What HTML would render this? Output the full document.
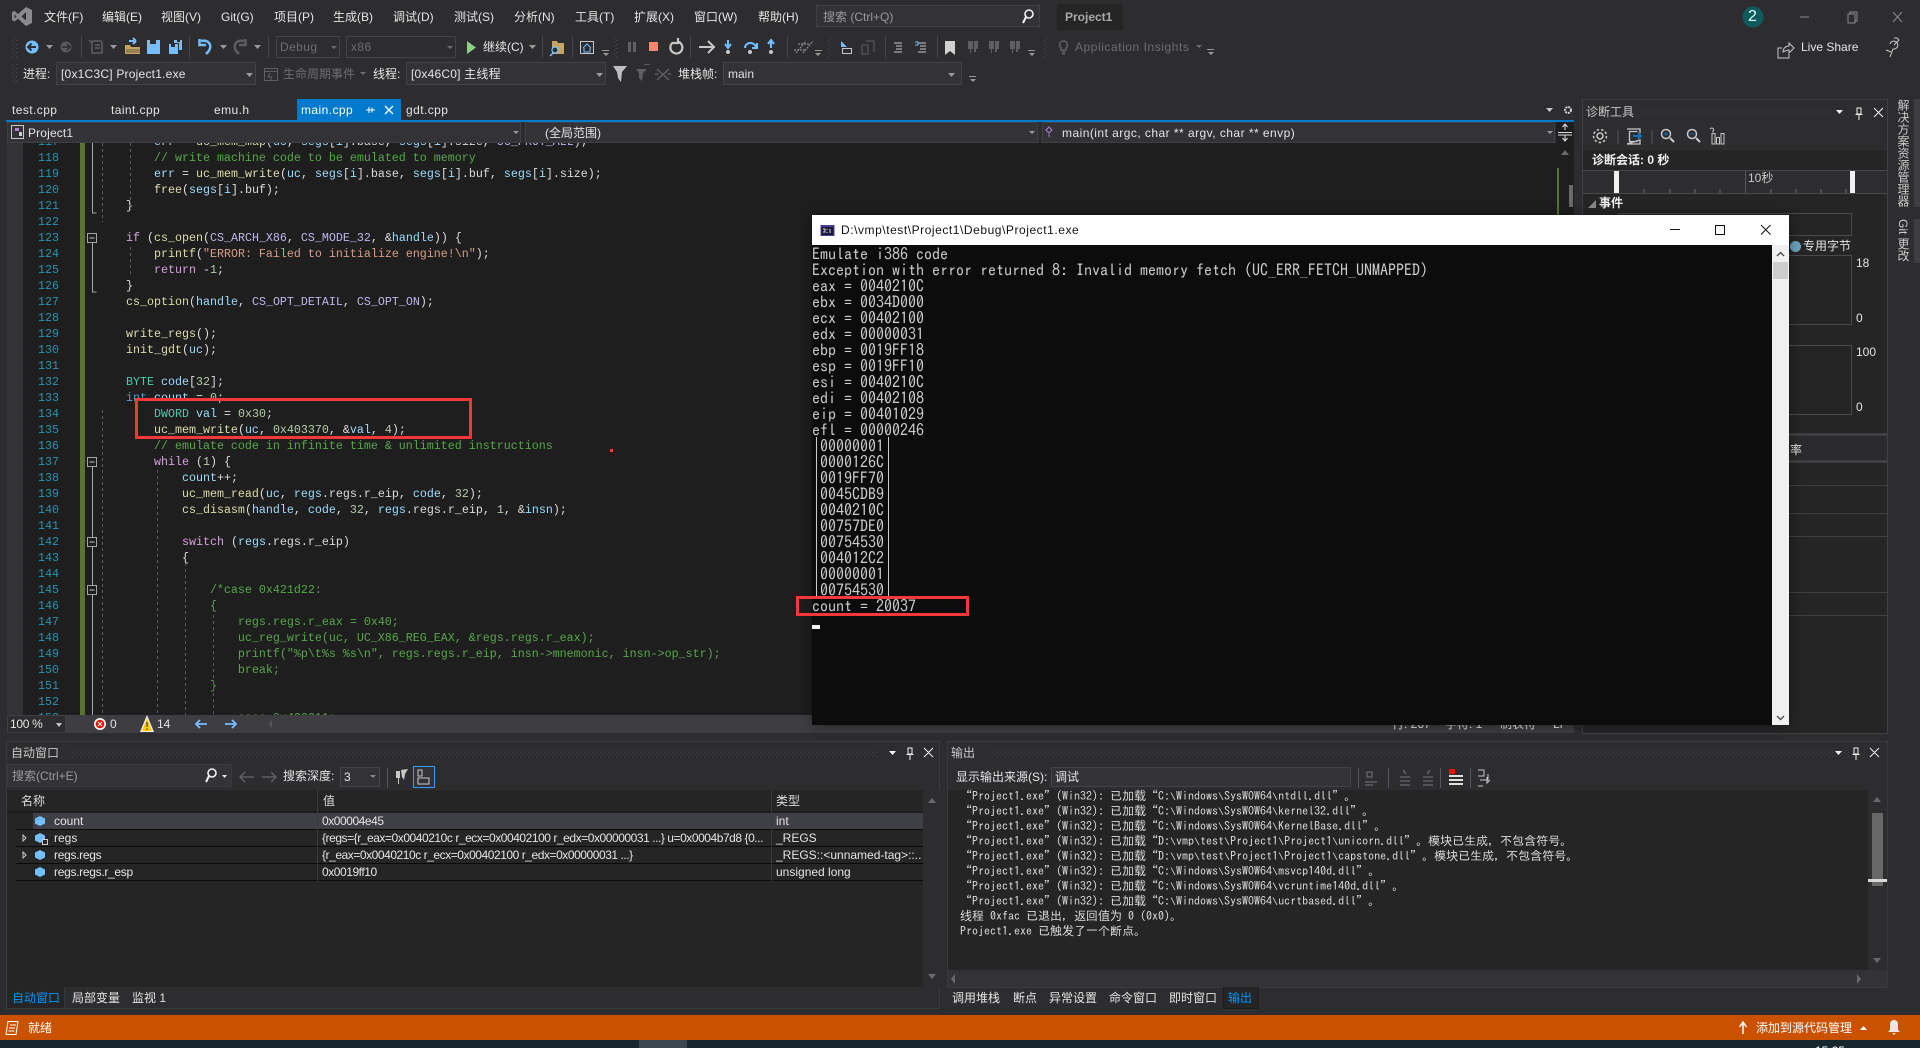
<!DOCTYPE html>
<html lang="zh"><head><meta charset="utf-8"><title>Project1</title>
<style>
html,body{margin:0;padding:0;background:#2d2d30;width:1920px;height:1048px;overflow:hidden}
body{position:relative;font:12px/16px "Liberation Sans","Noto Sans CJK SC",sans-serif;color:#e4e4e4}
.t{position:absolute;white-space:pre;line-height:16px}
.b{position:absolute;box-sizing:border-box}
.d{color:#6d6d70}
.w{letter-spacing:.42px}
.nn{letter-spacing:-.45px}
.code{position:absolute;left:126px;top:134px;font:11.67px/16px "Liberation Mono","Noto Sans CJK SC",monospace;color:#dcdcdc;white-space:pre;margin:0}
.ln{position:absolute;left:38px;top:134px;font:11.67px/16px "Liberation Mono",monospace;color:#2b91af;white-space:pre;margin:0}
.c{color:#57a64a}.k{color:#d8a0df}.u{color:#569cd6}.y{color:#4ec9b0}.f{color:#dcdcaa}.v{color:#9cdcfe}.s{color:#d69d85}.n{color:#b5cea8}.m{color:#bfb6ef}
.con{position:absolute;left:812px;top:246px;margin:0;font:16px/16px "IPAGothic","Liberation Mono",monospace;color:#cccccc;white-space:pre}
.out{position:absolute;left:960px;top:789px;margin:0;font:12px/15px "IPAGothic","Liberation Mono",monospace;color:#dcdcdc;white-space:pre}
.out div{height:15px;overflow:visible}
.out i{font-family:"Liberation Mono",monospace;font-size:10px;font-style:normal;line-height:1px}
.hdr{color:#dcdcdc}
.blue{color:#0097fb}
</style></head><body>

<!-- title & toolbars text -->
<div class="t" style="left:44px;top:9px">文件(F)</div>
<div class="t" style="left:102px;top:9px">编辑(E)</div>
<div class="t" style="left:161px;top:9px">视图(V)</div>
<div class="t" style="left:221px;top:9px">Git(G)</div>
<div class="t" style="left:274px;top:9px">项目(P)</div>
<div class="t" style="left:333px;top:9px">生成(B)</div>
<div class="t" style="left:393px;top:9px">调试(D)</div>
<div class="t" style="left:454px;top:9px">测试(S)</div>
<div class="t" style="left:514px;top:9px">分析(N)</div>
<div class="t" style="left:575px;top:9px">工具(T)</div>
<div class="t" style="left:634px;top:9px">扩展(X)</div>
<div class="t" style="left:694px;top:9px">窗口(W)</div>
<div class="t" style="left:758px;top:9px">帮助(H)</div>
<div class="b" style="left:816px;top:5px;width:224px;height:22px;background:#333337;border:1px solid #3f3f46"></div>
<div class="t" style="left:823px;top:9px;color:#999">搜索 (Ctrl+Q)</div>
<div class="b" style="left:1057px;top:4px;width:66px;height:26px;background:#252526"></div>
<div class="t" style="left:1065px;top:9px;font-weight:bold;color:#a8a8a8">Project1</div>
<div class="t" style="left:1748px;top:9px;font-size:16px;color:#dff;z-index:2">2</div>

<div class="b" style="left:276px;top:36px;width:64px;height:22px;border:1px solid #434346"></div>
<div class="t d w" style="left:280px;top:39px">Debug</div>
<div class="b" style="left:346px;top:36px;width:110px;height:22px;border:1px solid #434346"></div>
<div class="t d w" style="left:351px;top:39px">x86</div>
<div class="t" style="left:483px;top:39px">继续(C)</div>
<div class="t d" style="left:1075px;top:39px;letter-spacing:.55px">Application Insights</div>
<div class="t" style="left:1801px;top:39px">Live Share</div>

<div class="t" style="left:23px;top:66px">进程:</div>
<div class="b" style="left:56px;top:62px;width:200px;height:23px;background:#333337;border:1px solid #434346"></div>
<div class="t" style="left:61px;top:66px;letter-spacing:.22px">[0x1C3C] Project1.exe</div>
<div class="t d" style="left:283px;top:66px">生命周期事件</div>
<div class="t" style="left:373px;top:66px">线程:</div>
<div class="b" style="left:406px;top:62px;width:200px;height:23px;background:#333337;border:1px solid #434346"></div>
<div class="t" style="left:411px;top:66px;letter-spacing:.2px">[0x46C0] 主线程</div>
<div class="t" style="left:678px;top:66px">堆栈帧:</div>
<div class="b" style="left:723px;top:62px;width:239px;height:23px;background:#333337;border:1px solid #434346"></div>
<div class="t" style="left:728px;top:66px">main</div>

<!-- document tabs -->
<div class="b" style="left:297px;top:99px;width:104px;height:21px;background:#007acc"></div>
<div class="b" style="left:6px;top:120px;width:1568px;height:2px;background:#007acc"></div>
<div class="t w" style="left:12px;top:102px">test.cpp</div>
<div class="t w" style="left:111px;top:102px">taint.cpp</div>
<div class="t w" style="left:214px;top:102px">emu.h</div>
<div class="t w" style="left:301px;top:102px;color:#fff">main.cpp</div>
<div class="t w" style="left:406px;top:102px">gdt.cpp</div>

<!-- nav bar -->
<div class="b" style="left:6px;top:122px;width:1568px;height:21px;background:#2d2d30"></div>
<div class="b" style="left:7px;top:122px;width:514px;height:21px;background:#333337;border:1px solid #3f3f46"></div>
<div class="b" style="left:525px;top:122px;width:513px;height:21px;background:#333337;border:1px solid #3f3f46"></div>
<div class="b" style="left:1042px;top:122px;width:513px;height:21px;background:#333337;border:1px solid #3f3f46"></div>
<div class="b" style="left:1556px;top:122px;width:18px;height:21px;background:#1e1e1e"></div>
<div class="t" style="left:28px;top:125px;letter-spacing:.15px">Project1</div>
<div class="t" style="left:545px;top:125px">(全局范围)</div>
<div class="t" style="left:1062px;top:125px;letter-spacing:.46px">main(int argc, char ** argv, char ** envp)</div>

<!-- editor -->
<div class="b" style="left:7px;top:143px;width:1567px;height:572px;background:#1e1e1e;overflow:hidden">
<pre class="ln" style="left:31px;top:-9px">117
118
119
120
121
122
123
124
125
126
127
128
129
130
131
132
133
134
135
136
137
138
139
140
141
142
143
144
145
146
147
148
149
150
151
152
153</pre>
<pre class="code" style="left:119px;top:-9px">    <span class="v">err</span> = <span class="f">uc_mem_map</span>(<span class="v">uc</span>, <span class="v">segs</span>[<span class="v">i</span>].base, <span class="v">segs</span>[<span class="v">i</span>].size, <span class="m">UC_PROT_ALL</span>);
    <span class="c">// write machine code to be emulated to memory</span>
    <span class="v">err</span> = <span class="f">uc_mem_write</span>(<span class="v">uc</span>, <span class="v">segs</span>[<span class="v">i</span>].base, <span class="v">segs</span>[<span class="v">i</span>].buf, <span class="v">segs</span>[<span class="v">i</span>].size);
    <span class="f">free</span>(<span class="v">segs</span>[<span class="v">i</span>].buf);
}

<span class="k">if</span> (<span class="f">cs_open</span>(<span class="m">CS_ARCH_X86</span>, <span class="m">CS_MODE_32</span>, &amp;<span class="v">handle</span>)) {
    <span class="f">printf</span>(<span class="s">"ERROR: Failed to initialize engine!\n"</span>);
    <span class="k">return</span> -<span class="n">1</span>;
}
<span class="f">cs_option</span>(<span class="v">handle</span>, <span class="m">CS_OPT_DETAIL</span>, <span class="m">CS_OPT_ON</span>);

<span class="f">write_regs</span>();
<span class="f">init_gdt</span>(<span class="v">uc</span>);

<span class="y">BYTE</span> <span class="v">code</span>[<span class="n">32</span>];
<span class="u">int</span> <span class="v">count</span> = <span class="n">0</span>;
    <span class="y">DWORD</span> <span class="v">val</span> = <span class="n">0x30</span>;
    <span class="f">uc_mem_write</span>(<span class="v">uc</span>, <span class="n">0x403370</span>, &amp;<span class="v">val</span>, <span class="n">4</span>);
    <span class="c">// emulate code in infinite time &amp; unlimited instructions</span>
    <span class="k">while</span> (<span class="n">1</span>) {
        <span class="v">count</span>++;
        <span class="f">uc_mem_read</span>(<span class="v">uc</span>, <span class="v">regs</span>.regs.r_eip, <span class="v">code</span>, <span class="n">32</span>);
        <span class="f">cs_disasm</span>(<span class="v">handle</span>, <span class="v">code</span>, <span class="n">32</span>, <span class="v">regs</span>.regs.r_eip, <span class="n">1</span>, &amp;<span class="v">insn</span>);

        <span class="k">switch</span> (<span class="v">regs</span>.regs.r_eip)
        {

<span class="c">            /*case 0x421d22:
            {
                regs.regs.r_eax = 0x40;
                uc_reg_write(uc, UC_X86_REG_EAX, &amp;regs.regs.r_eax);
                printf("%p\t%s %s\n", regs.regs.r_eip, insn-&gt;mnemonic, insn-&gt;op_str);
                break;
            }

                case 0x423311:</span></pre>
</div>
<div class="b" style="left:7px;top:143px;width:16px;height:572px;background:#333337"></div>

<!-- strip below editor -->
<div class="b" style="left:7px;top:715px;width:1567px;height:18px;background:#3e3e42"></div>
<div class="b" style="left:7px;top:715px;width:59px;height:18px;background:#2d2d30;border:1px solid #3f3f46"></div>
<div class="t" style="left:10px;top:716px;letter-spacing:-.3px">100 %</div>
<div class="t" style="left:110px;top:716px">0</div>
<div class="t" style="left:157px;top:716px">14</div>
<div class="t" style="left:1392px;top:716px">行: 267</div>
<div class="t" style="left:1445px;top:716px">字符: 1</div>
<div class="t" style="left:1500px;top:716px">制表符</div>
<div class="t" style="left:1553px;top:716px">LF</div>

<!-- Diagnostics -->
<div class="b" style="left:1582px;top:99px;width:306px;height:635px;border:1px solid #3f3f46;background:#252526"></div>
<div class="b" style="left:1583px;top:100px;width:304px;height:50px;background:#2d2d30"></div>
<div class="t" style="left:1586px;top:104px;color:#c8c8c8">诊断工具</div>
<div class="t" style="left:1592px;top:152px;font-weight:bold;color:#f1f1f1">诊断会话: 0 秒</div>
<div class="b" style="left:1583px;top:170px;width:304px;height:24px;background:#2d2d30;border-top:1px solid #4a4a4e;border-bottom:1px solid #4a4a4e"></div>
<div class="b" style="left:1745px;top:171px;width:1px;height:22px;background:#55555a"></div>
<div class="b" style="left:1614px;top:171px;width:5px;height:22px;background:#f1f1f1"></div>
<div class="b" style="left:1850px;top:171px;width:5px;height:22px;background:#f1f1f1"></div>
<div class="t" style="left:1748px;top:170px;color:#c8c8c8">10秒</div>
<div class="t" style="left:1599px;top:195px;font-weight:bold;color:#f1f1f1">事件</div>
<div class="b" style="left:1618px;top:213px;width:234px;height:23px;border:1px solid #4a4a4e"></div>
<div class="b" style="left:1790px;top:241px;width:11px;height:11px;border-radius:50%;background:#6ba2bd"></div>
<div class="t" style="left:1803px;top:238px">专用字节</div>
<div class="b" style="left:1618px;top:255px;width:234px;height:70px;border:1px solid #4a4a4e"></div>
<div class="t" style="left:1856px;top:255px">18</div>
<div class="t" style="left:1856px;top:310px">0</div>
<div class="b" style="left:1618px;top:345px;width:234px;height:70px;border:1px solid #4a4a4e"></div>
<div class="t" style="left:1856px;top:344px">100</div>
<div class="t" style="left:1856px;top:399px">0</div>
<div class="b" style="left:1583px;top:433px;width:304px;height:3px;background:#3f3f42"></div>
<div class="b" style="left:1583px;top:436px;width:304px;height:24px;background:#2a2a2c"></div>
<div class="t" style="left:1790px;top:442px">率</div>
<div class="b" style="left:1583px;top:460px;width:304px;height:3px;background:#3f3f42"></div>
<div class="b" style="left:1583px;top:485px;width:304px;height:1px;background:#3f3f42"></div>
<div class="b" style="left:1583px;top:513px;width:304px;height:1px;background:#3f3f42"></div>
<div class="b" style="left:1583px;top:536px;width:304px;height:1px;background:#3f3f42"></div>
<div class="b" style="left:1583px;top:592px;width:304px;height:1px;background:#3f3f42"></div>
<div class="b" style="left:1583px;top:615px;width:304px;height:1px;background:#3f3f42"></div>

<!-- right sidebar -->
<div class="b" style="left:1914px;top:99px;width:6px;height:108px;background:#3e3e42"></div>
<div class="b" style="left:1914px;top:219px;width:6px;height:44px;background:#3e3e42"></div>
<div class="t" style="left:1895px;top:99px;writing-mode:vertical-rl;line-height:16px;color:#c8c8c8">解决方案资源管理器</div>
<div class="t" style="left:1895px;top:219px;writing-mode:vertical-rl;line-height:16px;color:#c8c8c8">Git 更改</div>

<!-- Auto panel -->
<div class="b" style="left:6px;top:741px;width:934px;height:268px;border:1px solid #3a3a3d;background:#2d2d30"></div>
<div class="t" style="left:11px;top:745px;color:#c8c8c8">自动窗口</div>
<div class="b" style="left:7px;top:764px;width:225px;height:23px;background:#333337;border:1px solid #3a3a3d"></div>
<div class="t" style="left:12px;top:768px;color:#999">搜索(Ctrl+E)</div>
<div class="t" style="left:283px;top:768px">搜索深度:</div>
<div class="b" style="left:340px;top:767px;width:40px;height:20px;background:#333337;border:1px solid #434346"></div>
<div class="t" style="left:344px;top:769px">3</div>
<div class="b" style="left:413px;top:766px;width:22px;height:22px;border:1px solid #3399ff;background:#333337"></div>
<div class="b" style="left:7px;top:790px;width:933px;height:197px;background:#252526"></div>
<div class="t hdr" style="left:21px;top:793px">名称</div>
<div class="t hdr" style="left:323px;top:793px">值</div>
<div class="t hdr" style="left:776px;top:793px">类型</div>
<div class="b" style="left:7px;top:811px;width:916px;height:2px;background:#1c1c1c"></div>
<div class="b" style="left:33px;top:813px;width:890px;height:16px;background:#3f3f46"></div>
<div class="b" style="left:16px;top:829px;width:907px;height:1px;background:#0a0a0a"></div>
<div class="b" style="left:16px;top:846px;width:907px;height:1px;background:#0a0a0a"></div>
<div class="b" style="left:16px;top:863px;width:907px;height:1px;background:#0a0a0a"></div>
<div class="b" style="left:16px;top:880px;width:907px;height:1px;background:#0a0a0a"></div>
<div class="b" style="left:317px;top:790px;width:1px;height:91px;background:#3a3a3d"></div>
<div class="b" style="left:771px;top:790px;width:1px;height:91px;background:#3a3a3d"></div>
<div class="t" style="left:54px;top:813px">count</div>
<div class="t nn" style="left:322px;top:813px;width:445px;overflow:hidden">0x00004e45</div>
<div class="t" style="left:776px;top:813px">int</div>
<div class="t" style="left:54px;top:830px">regs</div>
<div class="t nn" style="left:322px;top:830px;width:448px;overflow:hidden">{regs={r_eax=0x0040210c r_ecx=0x00402100 r_edx=0x00000031 ...} u=0x0004b7d8 {0...</div>
<div class="t" style="left:776px;top:830px">_REGS</div>
<div class="t" style="left:54px;top:847px;letter-spacing:-.3px">regs.regs</div>
<div class="t nn" style="left:322px;top:847px">{r_eax=0x0040210c r_ecx=0x00402100 r_edx=0x00000031 ...}</div>
<div class="t" style="left:776px;top:847px;width:146px;overflow:hidden">_REGS::&lt;unnamed-tag&gt;::...</div>
<div class="t" style="left:54px;top:864px;letter-spacing:-.3px">regs.regs.r_esp</div>
<div class="t nn" style="left:322px;top:864px">0x0019ff10</div>
<div class="t" style="left:776px;top:864px">unsigned long</div>
<div class="b" style="left:923px;top:790px;width:17px;height:197px;background:#2d2d30"></div>
<div class="b" style="left:6px;top:987px;width:59px;height:22px;background:#252526;border:1px solid #3a3a3d;border-top:0"></div>
<div class="t blue" style="left:12px;top:990px">自动窗口</div>
<div class="t" style="left:72px;top:990px">局部变量</div>
<div class="t" style="left:132px;top:990px">监视 1</div>

<!-- Output panel -->
<div class="b" style="left:947px;top:741px;width:941px;height:247px;border:1px solid #3a3a3d;background:#2d2d30"></div>
<div class="t" style="left:951px;top:745px;color:#c8c8c8">输出</div>
<div class="t" style="left:956px;top:769px">显示输出来源(S):</div>
<div class="b" style="left:1051px;top:767px;width:300px;height:20px;background:#333337;border:1px solid #434346"></div>
<div class="t" style="left:1055px;top:769px">调试</div>
<div class="b" style="left:948px;top:790px;width:920px;height:180px;background:#252526"></div>
<div class="out"><div>“Project1.exe”(Win32): 已加载“C:<i>\</i>Windows<i>\</i>SysWOW64<i>\</i>ntdll.dll”。</div><div>“Project1.exe”(Win32): 已加载“C:<i>\</i>Windows<i>\</i>SysWOW64<i>\</i>kernel32.dll”。</div><div>“Project1.exe”(Win32): 已加载“C:<i>\</i>Windows<i>\</i>SysWOW64<i>\</i>KernelBase.dll”。</div><div>“Project1.exe”(Win32): 已加载“D:<i>\</i>vmp<i>\</i>test<i>\</i>Project1<i>\</i>Project1<i>\</i>unicorn.dll”。模块已生成，不包含符号。</div><div>“Project1.exe”(Win32): 已加载“D:<i>\</i>vmp<i>\</i>test<i>\</i>Project1<i>\</i>Project1<i>\</i>capstone.dll”。模块已生成，不包含符号。</div><div>“Project1.exe”(Win32): 已加载“C:<i>\</i>Windows<i>\</i>SysWOW64<i>\</i>msvcp140d.dll”。</div><div>“Project1.exe”(Win32): 已加载“C:<i>\</i>Windows<i>\</i>SysWOW64<i>\</i>vcruntime140d.dll”。</div><div>“Project1.exe”(Win32): 已加载“C:<i>\</i>Windows<i>\</i>SysWOW64<i>\</i>ucrtbased.dll”。</div><div>线程 0xfac 已退出，返回值为 0 (0x0)。</div><div>Project1.exe 已触发了一个断点。</div></div>
<div class="b" style="left:1868px;top:790px;width:19px;height:180px;background:#2d2d30"></div>
<div class="b" style="left:1872px;top:813px;width:11px;height:73px;background:#686868"></div>
<div class="b" style="left:1868px;top:879px;width:19px;height:3px;background:#d8d8d8"></div>
<div class="b" style="left:948px;top:970px;width:939px;height:17px;background:#333337"></div>
<div class="b" style="left:1223px;top:987px;width:36px;height:22px;background:#252526;border:1px solid #1c1c1c;border-top:0"></div>
<div class="t" style="left:952px;top:990px">调用堆栈</div>
<div class="t" style="left:1013px;top:990px">断点</div>
<div class="t" style="left:1049px;top:990px">异常设置</div>
<div class="t" style="left:1109px;top:990px">命令窗口</div>
<div class="t" style="left:1169px;top:990px">即时窗口</div>
<div class="t blue" style="left:1228px;top:990px">输出</div>

<!-- status bar -->
<div class="b" style="left:0;top:1015px;width:1920px;height:25px;background:#ca5100"></div>
<div class="t" style="left:28px;top:1020px;color:#fff">就绪</div>
<div class="t" style="left:1756px;top:1020px;color:#fff">添加到源代码管理</div>
<div class="b" style="left:0;top:1040px;width:1920px;height:8px;background:#18272e;overflow:hidden">
  <div class="b" style="left:639px;top:0;width:48px;height:8px;background:#3a474e"></div>
  <div class="t" style="left:1815px;top:3px;color:#fff">15:25</div>
</div>

<!-- icons layer -->
<svg width="1920" height="1048" viewBox="0 0 1920 1048" style="position:absolute;left:0;top:0" fill="none">
<defs><pattern id="dot" width="4" height="4" patternUnits="userSpaceOnUse"><rect width="1" height="1" fill="#4a4a4e"/><rect x="2" y="2" width="1" height="1" fill="#4a4a4e"/></pattern></defs>
<!-- logo -->
<path fill-rule="evenodd" fill="#8a8a8d" d="M26 7 32 10V23L26 26 18 18.8 14.500 21.500 12 20V12L14.500 11 18 14ZM26 12 21.500 16.500 26 20.500ZM14.500 14.300V18.500L16.500 16.500Z"/>
<!-- title icons -->
<circle cx="1029" cy="14" r="4" stroke="#f1f1f1" stroke-width="1.600"/><path d="M1026 17 1023 23" stroke="#f1f1f1" stroke-width="2"/>
<circle cx="1753" cy="17" r="10.500" fill="#0f5a5c"/>
<path d="M1800 17H1809" stroke="#8a8a8d"/>
<path d="M1848 14h7v9h-7zM1850 14v-2h7v9h-2" stroke="#8a8a8d"/>
<path d="M1893 12 1902 22M1902 12 1893 22" stroke="#8a8a8d"/>
<!-- grips -->
<rect x="12" y="37" width="5" height="20" fill="url(#dot)"/><rect x="12" y="64" width="5" height="20" fill="url(#dot)"/>
<rect x="613" y="37" width="5" height="20" fill="url(#dot)"/><rect x="827" y="37" width="5" height="20" fill="url(#dot)"/><rect x="1043" y="37" width="5" height="20" fill="url(#dot)"/>
<rect x="70" y="749" width="808" height="8" fill="url(#dot)" opacity=".7"/>
<rect x="990" y="749" width="860" height="8" fill="url(#dot)" opacity=".6"/>
<rect x="1642" y="108" width="190" height="8" fill="url(#dot)" opacity=".6"/>
<!-- separators -->
<path stroke="#46464a" d="M81.500 36V58M189.500 36V58M268.500 36V58M542.500 36V58M572.500 36V58M690.500 36V58M787.500 36V58M885.500 36V58M937.500 36V58"/>
<!-- back / forward -->
<circle cx="32" cy="47" r="6.500" fill="#75beff"/><path d="M36 47H29M31.500 43.500 28 47 31.500 50.500" stroke="#2d2d30" stroke-width="2"/>
<circle cx="66" cy="47" r="5.500" fill="#5a5a5c"/><path d="M62 47H69M67 44 70 47 67 50" stroke="#2d2d30" stroke-width="1.500"/>
<path fill="#9a9a9a" d="M46 45h7l-3.500 4zM110 45h7l-3.500 4zM220 45h7l-3.500 4zM254 45h7l-3.500 4zM529 45h7l-3.500 4z"/>
<!-- new -->
<path stroke="#5f5f62" stroke-width="1.500" d="M92 41h9l1 2v10h-9M92 41v13M95 45h5M95 48h5M89 40l3 3"/>
<!-- open -->
<path fill="#c8a464" d="M125 45h5l1 2h9v7h-15z"/><path fill="#2d2d30" d="M126 49h14v4h-14z" opacity=".3"/><path stroke="#75beff" stroke-width="2" d="M129 41h5M136 41l-3-3M136 41l-3 3"/>
<!-- save -->
<path fill="#75beff" d="M147 40h13v14h-13z"/><path fill="#2d2d30" d="M150 40h6v4h-6z"/>
<path fill="#75beff" d="M169 44h9v10h-9zM174 40h8v10h-3v-7h-5z"/><path fill="#2d2d30" d="M171 44h4v3h-4zM177 40h3v2h-3z"/>
<!-- undo/redo -->
<path stroke="#75beff" stroke-width="2.500" d="M201 41c8-2 12 5 7 11l-2 2M199.500 39V45H206"/>
<path stroke="#5f5f62" stroke-width="2.500" d="M244 41c-8-2-12 5-7 11l2 2M245.500 39V45H239"/>
<!-- combos arrows -->
<path fill="#6d6d70" d="M331 46h6l-3 3zM447 46h6l-3 3z"/>
<!-- continue -->
<path fill="#89d185" d="M467 41V54L476 47.500Z"/>
<!-- find -->
<path fill="#c8a464" d="M552 41h5l1 2h6v11h-12z"/><circle cx="555" cy="50" r="3" fill="#2d2d30" stroke="#75beff" stroke-width="1.300"/><path stroke="#75beff" stroke-width="1.500" d="M553 53l-3 3"/>
<!-- home -->
<path stroke="#c8c8c8" d="M580.500 41.500h13v12h-13z"/><path stroke="#75beff" d="M583 48l4-4 4 4M584 48v4h6v-4"/>
<path fill="#9a9a9a" d="M602 50h7v1h-7zM603 53h6l-3 3z"/>
<path fill="#9a9a9a" d="M815 50h7v1h-7zM815 53h6l-3 3zM1028 50h7v1h-7zM1029 53h6l-3 3zM1207 49h7v1h-7zM1208 52h6l-3 3zM969 76h7v1h-7zM970 79h6l-3 3z"/>
<!-- debug ctl -->
<path fill="#5f5f62" d="M628 42h3v10h-3zM633 42h3v10h-3z"/>
<rect x="649" y="42" width="9" height="9" fill="#f48771"/>
<path stroke="#c8c8c8" stroke-width="2.200" d="M673 42.500a6 6 0 1 0 4-1M678 38v5h-5"/>
<path stroke="#c8c8c8" stroke-width="2" d="M699 47H713M708 41l6 6-6 6"/>
<path stroke="#75beff" stroke-width="2" d="M728 40V47M725 44l3 4 3-4"/><circle cx="728" cy="52" r="2" fill="#c8c8c8"/>
<path stroke="#75beff" stroke-width="2" d="M745 48c0-6 9-7 11-1M757 43v5h-5"/><circle cx="750" cy="52" r="2" fill="#c8c8c8"/>
<path stroke="#75beff" stroke-width="2" d="M771 48V41M768 44l3-4 3 4"/><circle cx="771" cy="52" r="2" fill="#c8c8c8"/>
<path stroke="#8a8a8d" stroke-width="1.200" stroke-dasharray="2 1" d="M796 53 806 41M798 44h11M794 50h11M803 53 813 41"/>
<!-- edit icons -->
<path fill="#75beff" d="M841 41l6 6h-6z"/><path stroke="#c8c8c8" d="M842.500 48.500h9v5h-9z"/>
<path stroke="#5f5f62" d="M862 45h6v9h-6zM866 41h8v11"/>
<path stroke="#c8c8c8" d="M894 43h8M896 46h6M896 49h6M894 52h8"/>
<path stroke="#c8c8c8" d="M918 43h8M920 46h6M920 49h6M918 52h8"/><path stroke="#75beff" d="M915 42h3v3h-3"/>
<path fill="#d0d0d0" d="M945 41h10v14l-5-4-5 4z"/>
<path fill="#5f5f62" d="M968 41h5v8h-2v4h-1v-4h-2zM974 41h4v8h-2v3h-2zM989 41h5v8h-2v4h-1v-4h-2zM995 41h4v8h-2v3h-2zM1010 41h5v8h-2v4h-1v-4h-2zM1016 41h4v8h-2v3h-2z"/>
<path stroke="#5f5f62" stroke-width="1.500" d="M1063 41a4 4 0 0 1 3 7v2h-5v-2a4 4 0 0 1 2-7M1061.500 52h4M1062 54h3"/>
<path fill="#6d6d70" d="M1196 45h6l-3 3zM360 72h6l-3 3z"/>
<path stroke="#c8c8c8" d="M1782 48h-4v10h11v-4M1783 52c0-4 3-6 6-6V43l5 5-5 5v-3c-2 0-4 1-6 2z"/>
<path stroke="#c8c8c8" d="M1890 44a4 4 0 1 1 3 5l-3 8M1886 50l5 2M1894 38h3l2 2-5 5"/>
<!-- row 2 -->
<path fill="#9a9a9a" d="M246 73h7l-3.500 4zM596 73h7l-3.500 4zM948 73h7l-3.500 4z"/>
<path stroke="#5f5f62" d="M264.500 68.500h13v12h-13zM264.500 71.500h13M270 73l-2 4h4l-2 4"/>
<path fill="#c0c0c0" d="M613 66h14l-5 6-1 10-3-4-1-6z"/>
<path fill="#5f5f62" d="M636 69h11l-4 4-1 8-3-3v-5z"/><path fill="#5f5f62" d="M644 64h6v1h-6z"/>
<path stroke="#5f5f62" stroke-width="1.500" d="M657 69l12 11M669 69l-12 11M655 74h3M668 74h3"/>
<!-- tab icons -->
<path stroke="#fff" d="M366 110h6M369 107v6M372 107.500v5M372 110h3"/>
<path stroke="#fff" stroke-width="1.300" d="M385 106l8 8M393 106l-8 8"/>
<path fill="#c8c8c8" d="M1546 108h7l-3.500 4z"/>
<circle cx="1568" cy="110" r="3" stroke="#d0d0d0" stroke-width="2" stroke-dasharray="2 .8"/>
<!-- nav -->
<path stroke="#c8c8c8" d="M11.500 125.500h12v13h-12z"/><path fill="#b180d7" d="M15 128h4v3h-4z"/><path fill="#d0d0d0" d="M19 132h3v4h-3z"/>
<path fill="#9a9a9a" d="M513 131h6l-3 3zM1029 131h6l-3 3zM1547 131h6l-3 3z"/>
<path stroke="#b180d7" d="M1049 127l3 3-3 3-3-3zM1049 134v3"/>
<path stroke="#e0e0e0" d="M1558 132.500h14M1565 124v6M1562.500 127l2.500-3 2.500 3M1565 135v6M1562.500 138l2.500 3 2.500-3M1558 135h14"/>
<!-- margin -->
<path fill="#577430" d="M80 143h5v572h-5z"/>
<path stroke="#a5a5a5" d="M92.500 143V213h4M92.500 243V292h4M92.500 467V715"/>
<g fill="#1e1e1e" stroke="#a5a5a5"><rect x="87.500" y="233.500" width="9" height="9"/><rect x="87.500" y="457.500" width="9" height="9"/><rect x="87.500" y="537.500" width="9" height="9"/><rect x="87.500" y="585.500" width="9" height="9"/></g>
<path stroke="#c8c8c8" d="M89.500 238h5M89.500 462h5M89.500 542h5M89.500 590h5"/>
<path stroke="#5a5a5a" stroke-dasharray="3 3" d="M102.500 143V222M102.500 410V715M130.500 143V210M130.500 247V274M157.500 470V715M185.500 563V715M213.500 615V715"/>
<!-- scrollbar (editor) -->
<path fill="#6a6a6d" d="M1561 155l4-5 4 5z"/><path fill="#577430" d="M1557 168h2v50h-2z"/><path fill="#6a6a6a" d="M1569 185h4v22h-4z"/>
<!-- status strip -->
<path fill="#c8c8c8" d="M56 723h6l-3 4z"/>
<circle cx="100" cy="724" r="6" fill="#f1f1f1"/><circle cx="100" cy="724" r="4.300" fill="#e51400"/><path stroke="#fff" d="M98 722l4 4M102 722l-4 4"/>
<path fill="#f1f1f1" d="M147 715 154 732H140Z"/><path fill="#ffcc00" d="M147 718 152 731H142Z"/><path stroke="#222" d="M147 722V727M147 728.500V730"/>
<path stroke="#75beff" stroke-width="1.800" d="M207 724H196M200 720l-4 4 4 4M225 724H236M232 720l4 4-4 4"/>
<path fill="#55555a" d="M272 720v8l-3-4z"/>
<!-- diagnostics icons -->
<path fill="#f1f1f1" d="M1836 110h7l-3.500 4z"/>
<path stroke="#f1f1f1" d="M1857 108h4v6h-4zM1855.500 114.500h7M1859 115v5M1874 108l9 9M1883 108l-9 9"/>
<circle cx="1600" cy="136" r="3" stroke="#c8c8c8" stroke-width="1.500"/><circle cx="1600" cy="136" r="6.500" stroke="#c8c8c8" stroke-width="1.500" stroke-dasharray="2.500 2"/>
<path stroke="#c8c8c8" stroke-width="1.300" d="M1627 129h13v4M1640 140v4h-13zM1629.500 131.500h8M1629.500 131v10.500h8"/><path stroke="#0e70c0" stroke-width="2" d="M1633 136h8M1638 133l3 3-3 3"/>
<circle cx="1666" cy="134" r="4.500" stroke="#c8c8c8" stroke-width="1.500"/><path stroke="#c8c8c8" stroke-width="2" d="M1670 138l4 4"/><path stroke="#0e70c0" d="M1664 134h4M1666 132v4"/>
<circle cx="1692" cy="134" r="4.500" stroke="#c8c8c8" stroke-width="1.500"/><path stroke="#c8c8c8" stroke-width="2" d="M1696 138l4 4"/><path stroke="#0e70c0" d="M1690 134h4"/>
<path stroke="#c8c8c8" d="M1712 133.500h3V144h-3zM1716.500 137.500h3V144h-3zM1721 133.500h3V144h-3zM1710 129a2 2 0 1 1 2 3"/>
<path stroke="#55555a" d="M1618 130v14M1652 130v14"/>
<path stroke="#6a6a6a" d="M1644 189v4M1670 189v4M1695 189v4M1720 189v4M1771 189v4M1796 189v4M1821 189v4M1846 189v4"/>
<path fill="#8a8a8d" d="M1588 208h8v-8z"/>
<!-- panel title icons -->
<path fill="#f1f1f1" d="M889 751h7l-3.500 4zM1835 751h7l-3.500 4z"/>
<path stroke="#f1f1f1" d="M908 748h4v6h-4zM906.500 754.500h7M910 755v5M924 748l9 9M933 748l-9 9M1854 748h4v6h-4zM1852.500 754.500h7M1856 755v5M1870 748l9 9M1879 748l-9 9"/>
<!-- auto toolbar -->
<circle cx="212" cy="773" r="4" stroke="#f1f1f1" stroke-width="1.600"/><path stroke="#f1f1f1" stroke-width="2" d="M209 776l-3 6"/>
<path fill="#e4e4e4" d="M222 775h5l-2.500 3z"/>
<path stroke="#5f5f62" stroke-width="1.500" d="M254 777H241M245 772l-5 5 5 5M262 777H275M271 772l5 5-5 5"/>
<path fill="#8a8a8d" d="M370 775h6l-3 3z"/>
<path stroke="#55555a" d="M387.500 768v20"/>
<path fill="#c8c8c8" d="M396 771h4v7h-1v6h-1v-6h-2zM401 770l7-1-3 5-1 6-2-3z"/>
<path stroke="#c8c8c8" d="M418 770h4v6h-4zM418 778h11v6h-11z"/>
<!-- watch icons -->
<path fill="#75beff" d="M40 816l5 2.500v5l-5 2.500-5-2.500v-5z"/><path fill="#1b5a88" d="M40 818l-3 1.500v1z" opacity=".6"/>
<path fill="#75beff" d="M40 833l5 2.500v5l-5 2.500-5-2.500v-5z"/><path fill="#d0d0d0" d="M42 839h6v6h-6z"/><path fill="#252526" d="M43 840h4v4h-4z"/>
<path fill="#75beff" d="M40 850l5 2.500v5l-5 2.500-5-2.500v-5z"/>
<path fill="#75beff" d="M40 867l5 2.500v5l-5 2.500-5-2.500v-5z"/>
<path stroke="#c8c8c8" d="M23 835l3 3-3 3zM23 852l3 3-3 3z"/>
<path fill="#6a6a6d" d="M928 803l4-5 4 5zM928 974l4 5 4-5z"/>
<!-- output toolbar -->
<path stroke="#55555a" d="M1358.500 768v20M1388.500 768v20M1440.500 768v20M1470.500 768v20"/>
<path stroke="#5f5f62" stroke-width="1.500" d="M1367 772h5v5h-5zM1365 782h12M1365 785h8M1400 777h10M1400 781h10M1400 785h10M1403 770l3 4M1423 777h10M1423 781h10M1423 785h10M1430 770l-3 4"/>
<path stroke="#e0e0e0" stroke-width="2" d="M1449 776h14M1449 780h14M1449 784h14"/><path fill="#e51400" d="M1449 769h6v5h-6z"/>
<path stroke="#c8c8c8" d="M1478 770h6v6h-6M1480 780h8v-6M1490 780l-3 3v-6M1478 786h5"/>
<path fill="#6a6a6d" d="M1873 802l4-5 4 5zM1873 958l4 5 4-5zM955 974v10l-4-5zM1857 974v10l4-5z"/>
<!-- status icons -->
<path stroke="#fff" d="M8 1021.500h10l-2 13H6zM10 1025h6M9 1028h6M8.500 1031h6"/>
<path stroke="#fff" stroke-width="1.500" d="M1743 1034V1023M1739.500 1027l3.500-5 3.500 5"/>
<path fill="#fff" d="M1860 1030l3.500-4 3.500 4z"/>
<path fill="#e8e8e8" d="M1894 1020a4 4 0 0 1 4 4v6l2 2h-12l2-2v-6a4 4 0 0 1 4-4zM1892 1033h4l-2 2z"/>
<!-- red dot -->
<rect x="610" y="449" width="3" height="3" fill="#f43838"/>
</svg>

<!-- console window -->
<div class="b" style="left:812px;top:215px;width:977px;height:510px;background:#0c0c0c;box-shadow:0 0 12px rgba(0,0,0,.45)">
  <div class="b" style="left:0;top:0;width:977px;height:30px;background:#fff"></div>
  <div class="t" style="left:29px;top:7px;color:#111;letter-spacing:.55px">D:\vmp\test\Project1\Debug\Project1.exe</div>
  <div class="b" style="left:960px;top:30px;width:17px;height:480px;background:#f0f0f0"></div>
  <div class="b" style="left:961px;top:47px;width:15px;height:17px;background:#cdcdcd"></div>
</div>
<pre class="con" style="z-index:3">Emulate i386 code
Exception with error returned 8: Invalid memory fetch (UC_ERR_FETCH_UNMAPPED)
eax = 0040210C
ebx = 0034D000
ecx = 00402100
edx = 00000031
ebp = 0019FF18
esp = 0019FF10
esi = 0040210C
edi = 00402108
eip = 00401029
efl = 00000246
 00000001
 0000126C
 0019FF70
 0045CDB9
 0040210C
 00757DE0
 00754530
 004012C2
 00000001
 00754530
count = 20037</pre>
<svg width="1920" height="1048" viewBox="0 0 1920 1048" style="position:absolute;left:0;top:0;z-index:4" fill="none">
<path stroke="#cccccc" d="M816.500 437V596M888.500 437V596"/>
<rect x="812" y="625" width="8" height="4" fill="#f2f2f2"/>
<rect x="820.500" y="225" width="14" height="11" fill="#4b3d8f"/><rect x="821.500" y="227" width="12" height="8" fill="#1a1a3a"/><path stroke="#ddd" d="M823 229h2v3h-2M827 229v1M827 232v1M830 229v4"/>
<path stroke="#111" d="M1670 229.500H1680M1715.500 225.500h9v9h-9zM1761 225l9.500 9.500M1770.500 225 1761 234.500"/>
<path stroke="#555" stroke-width="1.500" d="M1777 256l3.500-3.500 3.500 3.500M1777 716l3.500 3.500 3.500-3.500"/>
<!-- annotation rectangles -->
<rect x="136.500" y="399.500" width="334" height="38" stroke="#f43838" stroke-width="3"/>
<rect x="797.500" y="597.500" width="170" height="17" stroke="#f43838" stroke-width="3"/>
</svg>
</body></html>
